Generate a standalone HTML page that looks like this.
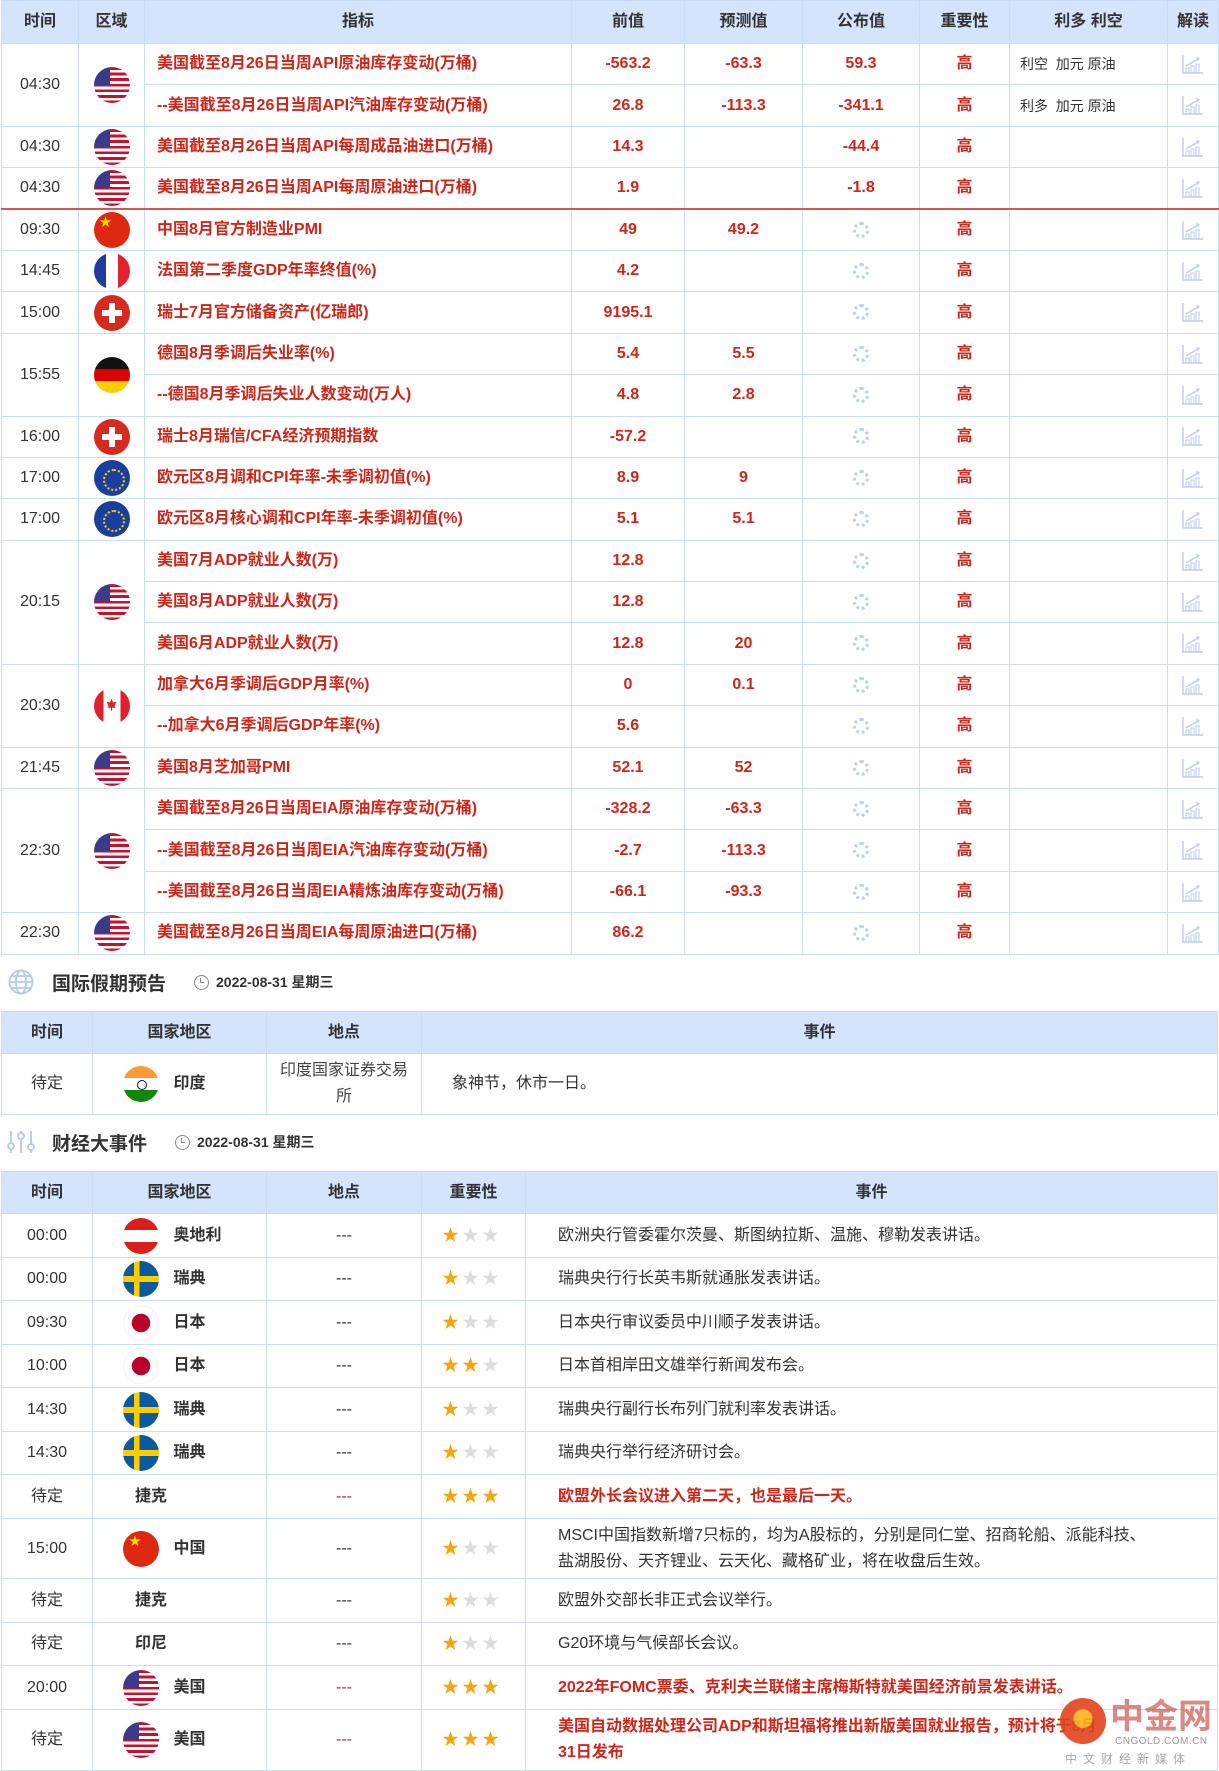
<!DOCTYPE html>
<html><head><meta charset="utf-8">
<style>
*{box-sizing:border-box;margin:0;padding:0}
body{width:1219px;height:1771px;background:#fff;font-family:"Liberation Sans","Noto Sans CJK SC",sans-serif;color:#333;overflow:hidden;position:relative}
table{border-collapse:collapse;table-layout:fixed;position:absolute;left:1px;width:1217px}
td,th{border:1px solid #c9dcf8;text-align:center;font-size:16px;vertical-align:middle;line-height:22px}
th{background:#d5e4fd;font-weight:bold;color:#333;font-size:16px}
.r{color:#d0261a;font-weight:bold}
.ind{text-align:left;padding-left:12px;color:#d0261a;font-weight:bold;font-size:16px;white-space:nowrap}
.lk{text-align:left;padding-left:10px;font-size:14px;color:#333}
.f{display:inline-block;width:36px;height:36px;border-radius:50%;vertical-align:middle;overflow:hidden;position:relative}
.us{background:linear-gradient(#3b3b8a,#3b3b8a) 0 0/45% 50% no-repeat,repeating-linear-gradient(#c8102e 0 2.8px,#fff 2.8px 5.6px)}
.cn{background:#de2910}
.cn:after{content:"★";position:absolute;left:6px;top:3px;color:#ffde00;font-size:12px;line-height:14px}
.fr{background:linear-gradient(90deg,#1f3b9b 33%,#fff 33% 66%,#e1232f 66%)}
.ch{background:#d52b1e}
.ch:before{content:"";position:absolute;left:15px;top:8px;width:6px;height:20px;background:#fff}
.ch:after{content:"";position:absolute;left:8px;top:15px;width:20px;height:6px;background:#fff}
.de{background:linear-gradient(#111 33%,#dd0000 33% 66%,#ffce00 66%)}
.eu{background:#1a3f9c}
.eu:after{content:"";position:absolute;left:9px;top:9px;width:18px;height:18px;border-radius:50%;border:2px dotted #ffd700}
.ca{background:linear-gradient(90deg,#e0202a 26%,#fff 26% 74%,#e0202a 74%)}
.ca:after{content:"";position:absolute;left:13px;top:11px;width:10px;height:12px;background:#e0202a;clip-path:polygon(50% 0,65% 30%,100% 25%,80% 60%,90% 75%,55% 75%,55% 100%,45% 100%,45% 75%,10% 75%,20% 60%,0 25%,35% 30%)}
.in{background:linear-gradient(#ff9933 33%,#fff 33% 66%,#138808 66%)}
.in:after{content:"";position:absolute;left:14px;top:14px;width:8px;height:8px;border-radius:50%;border:1px solid #000080}
.at{background:linear-gradient(#dd1c1c 33%,#fff 33% 66%,#dd1c1c 66%)}
.se{background:linear-gradient(90deg,transparent 30%,#fecc00 30% 46%,transparent 46%),linear-gradient(#0a5aa0 42%,#fecc00 42% 58%,#0a5aa0 58%)}
.jp{background:radial-gradient(circle,#bc002d 0 9px,#fff 9.5px);box-shadow:inset 0 0 2px #ddd}
.ld{display:inline-block;width:16px;height:16px;border-radius:50%;border:3px dotted #b9d0f2;vertical-align:middle}
.ch-ic{display:inline-block;width:22px;height:20px;vertical-align:middle}
.cty{text-align:left;padding-left:30px;font-weight:bold;font-size:16px}
.cty .f{margin-right:10px}
.cty.nf{padding-left:42px}
.ev{text-align:left;padding-left:32px;font-size:16px;line-height:26px}
.st{font-size:17px;letter-spacing:3px;text-align:left;padding-left:20px;line-height:18px}
.o{color:#f6a50b}.g{color:#ddd}
.sec{position:absolute;left:0;font-size:19px;font-weight:bold;color:#333;display:flex;align-items:center}
.sec .d{font-size:14px;margin-left:28px;display:flex;align-items:center}
.clk{display:inline-block;width:15px;height:15px;border:1.5px solid #888;border-radius:50%;margin-right:7px;position:relative}
.clk:after{content:"";position:absolute;left:5px;top:2px;width:3px;height:4px;border-left:1.5px solid #888;border-bottom:1.5px solid #888}
</style></head><body>
<svg width="0" height="0" style="position:absolute"><defs><symbol id="bar" viewBox="0 0 22 20"><path d="M1 1V19H21" stroke="#bccdee" fill="none" stroke-width="1.4"/><path d="M4 12L16 5" stroke="#bccdee" stroke-width="1.4"/><path d="M14 3L18 4L16 7Z" fill="#bccdee"/><rect x="4" y="14" width="3" height="5" fill="none" stroke="#bccdee"/><rect x="9" y="12" width="3" height="7" fill="none" stroke="#bccdee"/><rect x="14" y="10" width="3" height="9" fill="none" stroke="#bccdee"/></symbol></defs></svg>
<table style="top:0">
<colgroup><col style="width:77px"><col style="width:66px"><col style="width:427px"><col style="width:113px"><col style="width:118px"><col style="width:117px"><col style="width:90px"><col style="width:158px"><col style="width:51px"></colgroup>
<tr style="height:43px"><th>时间</th><th>区域</th><th>指标</th><th>前值</th><th>预测值</th><th>公布值</th><th>重要性</th><th>利多 利空</th><th>解读</th></tr>
<tr style="height:41.4px"><td rowspan="2">04:30</td><td rowspan="2"><span class="f us"></span></td><td class="ind">美国截至8月26日当周API原油库存变动(万桶)</td><td class="r">-563.2</td><td class="r">-63.3</td><td class="r">59.3</td><td class="r">高</td><td class="lk">利空&nbsp; 加元 原油</td><td><svg class="ch-ic"><use href="#bar"/></svg></td></tr>
<tr style="height:41.4px"><td class="ind">--美国截至8月26日当周API汽油库存变动(万桶)</td><td class="r">26.8</td><td class="r">-113.3</td><td class="r">-341.1</td><td class="r">高</td><td class="lk">利多&nbsp; 加元 原油</td><td><svg class="ch-ic"><use href="#bar"/></svg></td></tr>
<tr style="height:41.4px"><td>04:30</td><td><span class="f us"></span></td><td class="ind">美国截至8月26日当周API每周成品油进口(万桶)</td><td class="r">14.3</td><td></td><td class="r">-44.4</td><td class="r">高</td><td></td><td><svg class="ch-ic"><use href="#bar"/></svg></td></tr>
<tr style="height:41.4px;border-bottom:2px solid #d9534f"><td>04:30</td><td><span class="f us"></span></td><td class="ind">美国截至8月26日当周API每周原油进口(万桶)</td><td class="r">1.9</td><td></td><td class="r">-1.8</td><td class="r">高</td><td></td><td><svg class="ch-ic"><use href="#bar"/></svg></td></tr>
<tr style="height:41.4px"><td>09:30</td><td><span class="f cn"></span></td><td class="ind">中国8月官方制造业PMI</td><td class="r">49</td><td class="r">49.2</td><td><span class="ld"></span></td><td class="r">高</td><td></td><td><svg class="ch-ic"><use href="#bar"/></svg></td></tr>
<tr style="height:41.4px"><td>14:45</td><td><span class="f fr"></span></td><td class="ind">法国第二季度GDP年率终值(%)</td><td class="r">4.2</td><td></td><td><span class="ld"></span></td><td class="r">高</td><td></td><td><svg class="ch-ic"><use href="#bar"/></svg></td></tr>
<tr style="height:41.4px"><td>15:00</td><td><span class="f ch"></span></td><td class="ind">瑞士7月官方储备资产(亿瑞郎)</td><td class="r">9195.1</td><td></td><td><span class="ld"></span></td><td class="r">高</td><td></td><td><svg class="ch-ic"><use href="#bar"/></svg></td></tr>
<tr style="height:41.4px"><td rowspan="2">15:55</td><td rowspan="2"><span class="f de"></span></td><td class="ind">德国8月季调后失业率(%)</td><td class="r">5.4</td><td class="r">5.5</td><td><span class="ld"></span></td><td class="r">高</td><td></td><td><svg class="ch-ic"><use href="#bar"/></svg></td></tr>
<tr style="height:41.4px"><td class="ind">--德国8月季调后失业人数变动(万人)</td><td class="r">4.8</td><td class="r">2.8</td><td><span class="ld"></span></td><td class="r">高</td><td></td><td><svg class="ch-ic"><use href="#bar"/></svg></td></tr>
<tr style="height:41.4px"><td>16:00</td><td><span class="f ch"></span></td><td class="ind">瑞士8月瑞信/CFA经济预期指数</td><td class="r">-57.2</td><td></td><td><span class="ld"></span></td><td class="r">高</td><td></td><td><svg class="ch-ic"><use href="#bar"/></svg></td></tr>
<tr style="height:41.4px"><td>17:00</td><td><span class="f eu"></span></td><td class="ind">欧元区8月调和CPI年率-未季调初值(%)</td><td class="r">8.9</td><td class="r">9</td><td><span class="ld"></span></td><td class="r">高</td><td></td><td><svg class="ch-ic"><use href="#bar"/></svg></td></tr>
<tr style="height:41.4px"><td>17:00</td><td><span class="f eu"></span></td><td class="ind">欧元区8月核心调和CPI年率-未季调初值(%)</td><td class="r">5.1</td><td class="r">5.1</td><td><span class="ld"></span></td><td class="r">高</td><td></td><td><svg class="ch-ic"><use href="#bar"/></svg></td></tr>
<tr style="height:41.4px"><td rowspan="3">20:15</td><td rowspan="3"><span class="f us"></span></td><td class="ind">美国7月ADP就业人数(万)</td><td class="r">12.8</td><td></td><td><span class="ld"></span></td><td class="r">高</td><td></td><td><svg class="ch-ic"><use href="#bar"/></svg></td></tr>
<tr style="height:41.4px"><td class="ind">美国8月ADP就业人数(万)</td><td class="r">12.8</td><td></td><td><span class="ld"></span></td><td class="r">高</td><td></td><td><svg class="ch-ic"><use href="#bar"/></svg></td></tr>
<tr style="height:41.4px"><td class="ind">美国6月ADP就业人数(万)</td><td class="r">12.8</td><td class="r">20</td><td><span class="ld"></span></td><td class="r">高</td><td></td><td><svg class="ch-ic"><use href="#bar"/></svg></td></tr>
<tr style="height:41.4px"><td rowspan="2">20:30</td><td rowspan="2"><span class="f ca"></span></td><td class="ind">加拿大6月季调后GDP月率(%)</td><td class="r">0</td><td class="r">0.1</td><td><span class="ld"></span></td><td class="r">高</td><td></td><td><svg class="ch-ic"><use href="#bar"/></svg></td></tr>
<tr style="height:41.4px"><td class="ind">--加拿大6月季调后GDP年率(%)</td><td class="r">5.6</td><td></td><td><span class="ld"></span></td><td class="r">高</td><td></td><td><svg class="ch-ic"><use href="#bar"/></svg></td></tr>
<tr style="height:41.4px"><td>21:45</td><td><span class="f us"></span></td><td class="ind">美国8月芝加哥PMI</td><td class="r">52.1</td><td class="r">52</td><td><span class="ld"></span></td><td class="r">高</td><td></td><td><svg class="ch-ic"><use href="#bar"/></svg></td></tr>
<tr style="height:41.4px"><td rowspan="3">22:30</td><td rowspan="3"><span class="f us"></span></td><td class="ind">美国截至8月26日当周EIA原油库存变动(万桶)</td><td class="r">-328.2</td><td class="r">-63.3</td><td><span class="ld"></span></td><td class="r">高</td><td></td><td><svg class="ch-ic"><use href="#bar"/></svg></td></tr>
<tr style="height:41.4px"><td class="ind">--美国截至8月26日当周EIA汽油库存变动(万桶)</td><td class="r">-2.7</td><td class="r">-113.3</td><td><span class="ld"></span></td><td class="r">高</td><td></td><td><svg class="ch-ic"><use href="#bar"/></svg></td></tr>
<tr style="height:41.4px"><td class="ind">--美国截至8月26日当周EIA精炼油库存变动(万桶)</td><td class="r">-66.1</td><td class="r">-93.3</td><td><span class="ld"></span></td><td class="r">高</td><td></td><td><svg class="ch-ic"><use href="#bar"/></svg></td></tr>
<tr style="height:41.4px"><td>22:30</td><td><span class="f us"></span></td><td class="ind">美国截至8月26日当周EIA每周原油进口(万桶)</td><td class="r">86.2</td><td></td><td><span class="ld"></span></td><td class="r">高</td><td></td><td><svg class="ch-ic"><use href="#bar"/></svg></td></tr>
</table>

<div class="sec" style="top:968px;left:6px;height:28px">
<svg width="30" height="26" viewBox="0 0 30 26" style="margin-right:16px"><g fill="none" stroke="#b3c9ef" stroke-width="1.8"><circle cx="15" cy="13" r="11.5"/><ellipse cx="15" cy="13" rx="5" ry="11.5"/><path d="M3.5 13H26.5M5 7H25M5 19H25"/></g></svg>
国际假期预告<span class="d"><span class="clk"></span>2022-08-31 星期三</span></div>

<table style="top:1011px">
<colgroup><col style="width:91px"><col style="width:174px"><col style="width:155px"><col></colgroup>
<tr style="height:42px"><th>时间</th><th>国家地区</th><th>地点</th><th>事件</th></tr>
<tr style="height:61px"><td>待定</td><td class="cty"><span class="f in"></span> 印度</td><td style="font-size:16px;line-height:26px;color:#444;padding:0 12px">印度国家证券交易所</td><td class="ev" style="padding-left:30px">象神节，休市一日。</td></tr>
</table>

<div class="sec" style="top:1128px;left:6px;height:28px">
<svg width="30" height="26" viewBox="0 0 30 26" style="margin-right:16px"><g fill="none" stroke="#b3c9ef" stroke-width="1.8"><path d="M5 2V24M15 2V24M25 2V24"/><circle cx="5" cy="17" r="3" fill="#fff"/><circle cx="15" cy="7" r="3" fill="#fff"/><circle cx="25" cy="18" r="3" fill="#fff"/></g></svg>
财经大事件<span class="d"><span class="clk"></span>2022-08-31 星期三</span></div>

<table style="top:1171px">
<colgroup><col style="width:91px"><col style="width:174px"><col style="width:155px"><col style="width:104px"><col></colgroup>
<tr style="height:42px"><th>时间</th><th>国家地区</th><th>地点</th><th>重要性</th><th>事件</th></tr>
<tr style="height:44px"><td>00:00</td><td class="cty"><span class="f at"></span> 奥地利</td><td>---</td><td class="st"><span class="o">★</span><span class="g">★★</span></td><td class="ev">欧洲央行管委霍尔茨曼、斯图纳拉斯、温施、穆勒发表讲话。</td></tr>
<tr style="height:43px"><td>00:00</td><td class="cty"><span class="f se"></span> 瑞典</td><td>---</td><td class="st"><span class="o">★</span><span class="g">★★</span></td><td class="ev">瑞典央行行长英韦斯就通胀发表讲话。</td></tr>
<tr style="height:44px"><td>09:30</td><td class="cty"><span class="f jp"></span> 日本</td><td>---</td><td class="st"><span class="o">★</span><span class="g">★★</span></td><td class="ev">日本央行审议委员中川顺子发表讲话。</td></tr>
<tr style="height:43px"><td>10:00</td><td class="cty"><span class="f jp"></span> 日本</td><td>---</td><td class="st"><span class="o">★★</span><span class="g">★</span></td><td class="ev">日本首相岸田文雄举行新闻发布会。</td></tr>
<tr style="height:44px"><td>14:30</td><td class="cty"><span class="f se"></span> 瑞典</td><td>---</td><td class="st"><span class="o">★</span><span class="g">★★</span></td><td class="ev">瑞典央行副行长布列门就利率发表讲话。</td></tr>
<tr style="height:43px"><td>14:30</td><td class="cty"><span class="f se"></span> 瑞典</td><td>---</td><td class="st"><span class="o">★</span><span class="g">★★</span></td><td class="ev">瑞典央行举行经济研讨会。</td></tr>
<tr style="height:44px"><td>待定</td><td class="cty nf">捷克</td><td class="r" style="font-weight:normal">---</td><td class="st"><span class="o">★★★</span></td><td class="ev r">欧盟外长会议进入第二天，也是最后一天。</td></tr>
<tr style="height:60px"><td>15:00</td><td class="cty"><span class="f cn"></span> 中国</td><td>---</td><td class="st"><span class="o">★</span><span class="g">★★</span></td><td class="ev" style="padding-right:60px">MSCI中国指数新增7只标的，均为A股标的，分别是同仁堂、招商轮船、派能科技、盐湖股份、天齐锂业、云天化、藏格矿业，将在收盘后生效。</td></tr>
<tr style="height:44px"><td>待定</td><td class="cty nf">捷克</td><td>---</td><td class="st"><span class="o">★</span><span class="g">★★</span></td><td class="ev">欧盟外交部长非正式会议举行。</td></tr>
<tr style="height:43px"><td>待定</td><td class="cty nf">印尼</td><td>---</td><td class="st"><span class="o">★</span><span class="g">★★</span></td><td class="ev">G20环境与气候部长会议。</td></tr>
<tr style="height:44px"><td>20:00</td><td class="cty"><span class="f us"></span> 美国</td><td class="r" style="font-weight:normal">---</td><td class="st"><span class="o">★★★</span></td><td class="ev r">2022年FOMC票委、克利夫兰联储主席梅斯特就美国经济前景发表讲话。</td></tr>
<tr style="height:61px"><td>待定</td><td class="cty"><span class="f us"></span> 美国</td><td class="r" style="font-weight:normal">---</td><td class="st"><span class="o">★★★</span></td><td class="ev r" style="padding-right:110px">美国自动数据处理公司ADP和斯坦福将推出新版美国就业报告，预计将于8月31日发布</td></tr>
</table>

<div style="position:absolute;left:1060px;top:1698px;width:46px;height:46px;border-radius:50%;background:radial-gradient(circle at 50% 45%,#f6b21a 0 9px,#e0431a 10px);opacity:.9"></div>
<div style="position:absolute;left:1110px;top:1694px;font-size:34px;font-weight:bold;color:rgba(190,40,30,.55);font-family:'Noto Sans CJK SC',sans-serif;line-height:40px">中金网</div>
<div style="position:absolute;left:1115px;top:1736px;font-size:10px;color:#999;letter-spacing:.5px">CNGOLD.COM.CN</div>
<div style="position:absolute;left:1065px;top:1750px;font-size:12px;color:#aaa;letter-spacing:6px">中文财经新媒体</div>
</body></html>
